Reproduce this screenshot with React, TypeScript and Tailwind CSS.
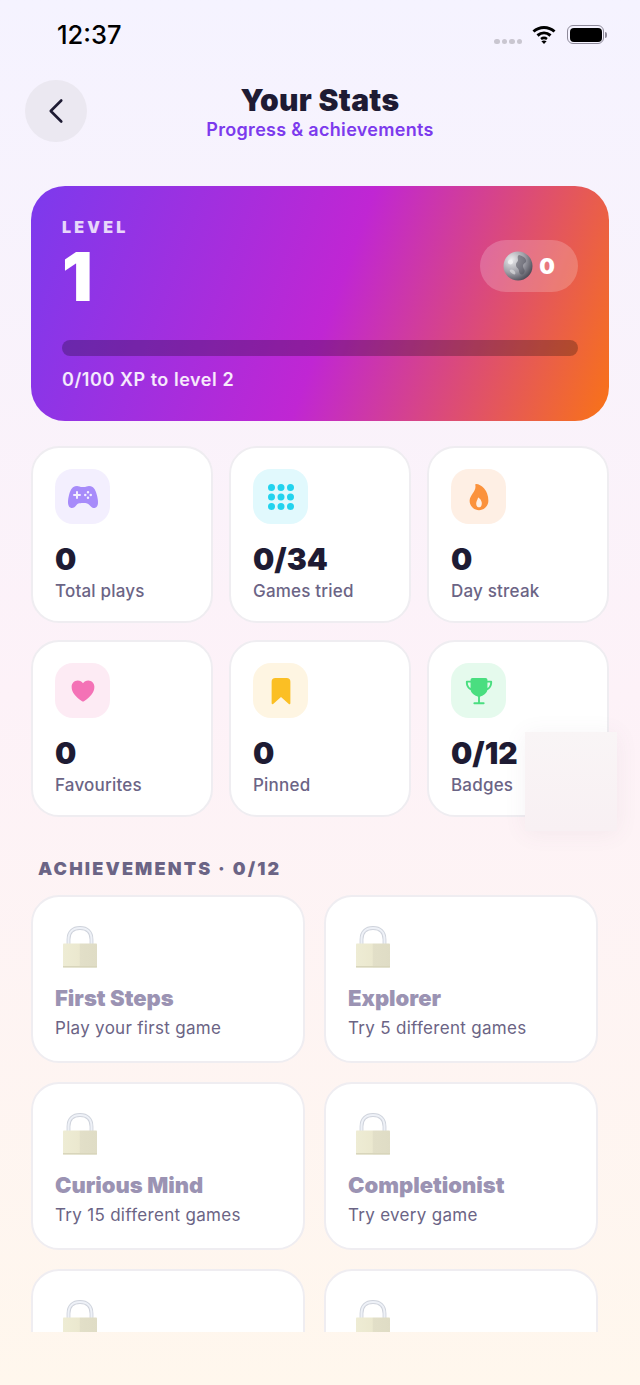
import React from "react";
import { ChevronLeft } from "lucide-react";
import { IoApps, IoBookmark, IoFlame, IoGameController, IoHeart, IoTrophy } from "react-icons/io5";

type Stat = { value: string; label: string; tile: string; icon: React.ReactNode };

const STATS: Stat[] = [
  { value: "0", label: "Total plays", tile: "bg-[#f3effe]", icon: <IoGameController className="text-[32px] text-[#a78bfa]" /> },
  { value: "0/34", label: "Games tried", tile: "bg-[#e1f9fd]", icon: <IoApps className="text-[32px] text-[#22d3ee]" /> },
  { value: "0", label: "Day streak", tile: "bg-[#feefe4]", icon: <IoFlame className="text-[30px] text-[#fb923c]" /> },
  { value: "0", label: "Favourites", tile: "bg-[#fdebf4]", icon: <IoHeart className="text-[28px] text-[#f472b6]" /> },
  { value: "0", label: "Pinned", tile: "bg-[#fef5e2]", icon: <IoBookmark className="text-[30px] text-[#fbbf24]" /> },
  { value: "0/12", label: "Badges", tile: "bg-[#e5faed]", icon: <IoTrophy className="text-[30px] text-[#4ade80]" /> },
];

// the last row sits under the fold, only its locks are on screen
const ACHIEVEMENTS = [
  { id: "first", title: "First Steps", desc: "Play your first game" },
  { id: "explorer", title: "Explorer", desc: "Try 5 different games" },
  { id: "curious", title: "Curious Mind", desc: "Try 15 different games" },
  { id: "complete", title: "Completionist", desc: "Try every game" },
  { id: "next-a" },
  { id: "next-b" },
];

export default function App() {
  return (
    <div className="relative h-[1385px] w-[640px] overflow-hidden bg-gradient-to-b from-[#f5f3ff] via-[#fdf2f8] to-[#fff7ed] font-['Inter',sans-serif]">
      <div className="h-[1332px] overflow-hidden">
        <StatusBar />

        <header className="grid grid-cols-[62px_1fr_62px] px-[25px]">
          <button className="flex h-[62px] w-[62px] items-center justify-center rounded-full bg-[#ebe8f1] text-[#1e1b33]">
            <ChevronLeft size={42} strokeWidth={1.5} />
          </button>
          <div className="flex flex-col items-center pt-1">
            <h1 className="text-[30px] leading-[32px] font-black tracking-[0.3px] text-[#1e1b33]">Your Stats</h1>
            <p className="mt-[2px] text-[18px] leading-[24px] font-semibold tracking-[0.3px] text-[#7c3aed]">
              Progress &amp; achievements
            </p>
          </div>
        </header>

        <main className="px-[31px] pt-[44px]">
          <LevelCard />

          <div className="mt-[25px] grid grid-cols-3 gap-x-4 gap-y-[17px]">
            {STATS.map((s) => (
              <StatCard key={s.label} stat={s} />
            ))}
          </div>

          <h2 className="mt-[41px] ml-[7px] text-[18px] leading-[22px] font-black tracking-[0.12em] text-[#6b6485]">
            ACHIEVEMENTS · 0/12
          </h2>

          <div className="mt-[15px] grid grid-cols-[274px_274px] gap-x-[19px] gap-y-[19px]">
            {ACHIEVEMENTS.map((a) => (
              <div
                key={a.id}
                className="flex h-[168px] flex-col rounded-[28px] border-2 border-[#efedf1] bg-white pt-[29px] pl-[22px]"
              >
                <LockGlyph />
                {a.title && (
                  <>
                    <div className="mt-[16px] text-[22px] leading-[28px] font-black text-[#9b93b3]">{a.title}</div>
                    <div className="mt-[5px] text-[17px] leading-[22px] tracking-[0.3px] text-[#6b6485]">{a.desc}</div>
                  </>
                )}
              </div>
            ))}
          </div>
        </main>
      </div>

      {/* toast just fading out over the badges card */}
      <div className="absolute top-[732px] left-[525px] h-[99px] w-[92px] bg-gradient-to-b from-[#f9f5f6] to-[#f8f0f3] shadow-[0_2px_22px_rgba(120,90,110,0.07)]" />
    </div>
  );
}

function StatusBar() {
  return (
    <div className="flex h-[80px] items-start justify-between pt-[20px] pr-[33px] pl-[57px]">
      <span className="text-[25.5px] leading-[30px] font-medium text-black">12:37</span>
      <div className="flex items-center pt-[5px]">
        <div className="mt-[14px] flex gap-[2px]">
          {[0, 1, 2, 3].map((i) => (
            <span key={i} className="h-[5px] w-[5.5px] rounded-full bg-[#c9c6d0]" />
          ))}
        </div>
        <svg className="ml-[10px]" width="24" height="19" viewBox="0 0 24 19" fill="none" stroke="#000">
          <path d="M1.5 6.5C7.5 1 16.5 1 22.5 6.5" strokeWidth="3" />
          <path d="M5.5 10.5C9.5 7 14.5 7 18.5 10.5" strokeWidth="3" />
          <path d="M9 14C11 12.6 13 12.6 15 14" strokeWidth="2.6" />
          <path d="M12 19L9.4 16.2C11 15.2 13 15.2 14.6 16.2Z" fill="#000" stroke="none" />
        </svg>
        <div className="ml-[11px] flex items-center">
          <div className="flex h-[19px] w-[37px] items-center justify-center rounded-[6px] border-[1.5px] border-[#8e8a9a]">
            <div className="h-[14px] w-[32px] rounded-[4px] bg-black" />
          </div>
          <div className="ml-[1px] h-[6px] w-[2px] rounded-r-full bg-[#8e8a9a]" />
        </div>
      </div>
    </div>
  );
}

function LevelCard() {
  return (
    <section className="h-[235px] rounded-[34px] bg-[linear-gradient(110deg,#7c3aed_0%,#c026d3_52%,#f97316_100%)] px-[31px] pt-[32px]">
      <div className="flex items-start justify-between">
        <div>
          <div className="text-[16px] leading-[18px] font-black tracking-[0.2em] text-white/80">LEVEL</div>
          <div className="mt-[2px] text-[68px] leading-[76px] font-black text-white">1</div>
        </div>
        <div className="mt-[22px] flex h-[52px] w-[98px] items-center justify-center gap-[6px] rounded-full bg-white/20">
          <Coin />
          <span className="text-[22px] font-black text-white">0</span>
        </div>
      </div>
      <div className="mt-[26px] h-4 rounded-full bg-black/25" />
      <div className="mt-[12px] text-[18px] leading-[24px] font-semibold tracking-[0.55px] text-white/90">
        0/100 XP to level 2
      </div>
    </section>
  );
}

function StatCard({ stat }: { stat: Stat }) {
  return (
    <div className="h-[177px] rounded-[28px] border-2 border-[#efedf1] bg-white pt-[21px] pl-[22px]">
      <div className={`flex h-[55px] w-[55px] items-center justify-center rounded-[18px] ${stat.tile}`}>{stat.icon}</div>
      <div className="mt-[15px] text-[30px] leading-[40px] font-black text-[#1e1b33]">{stat.value}</div>
      <div className="text-[17px] leading-[24px] font-medium tracking-[0.2px] text-[#6b6485]">{stat.label}</div>
    </div>
  );
}

function Coin() {
  return (
    <svg width="30" height="30" viewBox="0 0 30 30">
      <defs>
        <radialGradient id="coinFace" cx="0.28" cy="0.28" r="0.9">
          <stop offset="0" stopColor="#ececee" />
          <stop offset="0.5" stopColor="#a0a0a8" />
          <stop offset="1" stopColor="#33333f" />
        </radialGradient>
      </defs>
      <circle cx="15" cy="15" r="14.5" fill="url(#coinFace)" />
      <path d="M16 4c3 1 6 2 7 5s-3 3-3 6 3 4 1 7-5 1-5-2-3-3-3-6 2-3 2-5-1-4 1-5z" fill="#4a4a55" opacity="0.5" />
      <path d="M6 9c2-1 4 0 4 2s-2 3-4 2-1-3 0-4z" fill="#f4f4f5" opacity="0.8" />
      <path d="M7 19c2-1 4 0 5 2s0 3-2 2-4-3-3-4z" fill="#e2e2e5" opacity="0.6" />
    </svg>
  );
}

function LockGlyph() {
  return (
    <svg className="ml-[8px] shrink-0" width="34" height="42" viewBox="0 0 34 42">
      <defs>
        <linearGradient id="lockBody" x1="0" x2="1" y1="0" y2="0">
          <stop offset="0" stopColor="#eeecd4" />
          <stop offset="0.48" stopColor="#ebe8cf" />
          <stop offset="0.5" stopColor="#e2dfc8" />
          <stop offset="1" stopColor="#dfdcc5" />
        </linearGradient>
      </defs>
      <path d="M5.5 19V13.5C5.5 6 10 2 17 2s11.5 4 11.5 11.5V19" fill="none" stroke="#cfd3dc" strokeWidth="3.8" />
      <path d="M5.5 19V13.5C5.5 6 10 2 17 2s11.5 4 11.5 11.5V19" fill="none" stroke="#eef1f7" strokeWidth="2" />
      <rect y="17.5" width="34" height="24" rx="0.8" fill="url(#lockBody)" />
      <rect y="40" width="34" height="1.5" fill="#d8d5bb" />
    </svg>
  );
}
